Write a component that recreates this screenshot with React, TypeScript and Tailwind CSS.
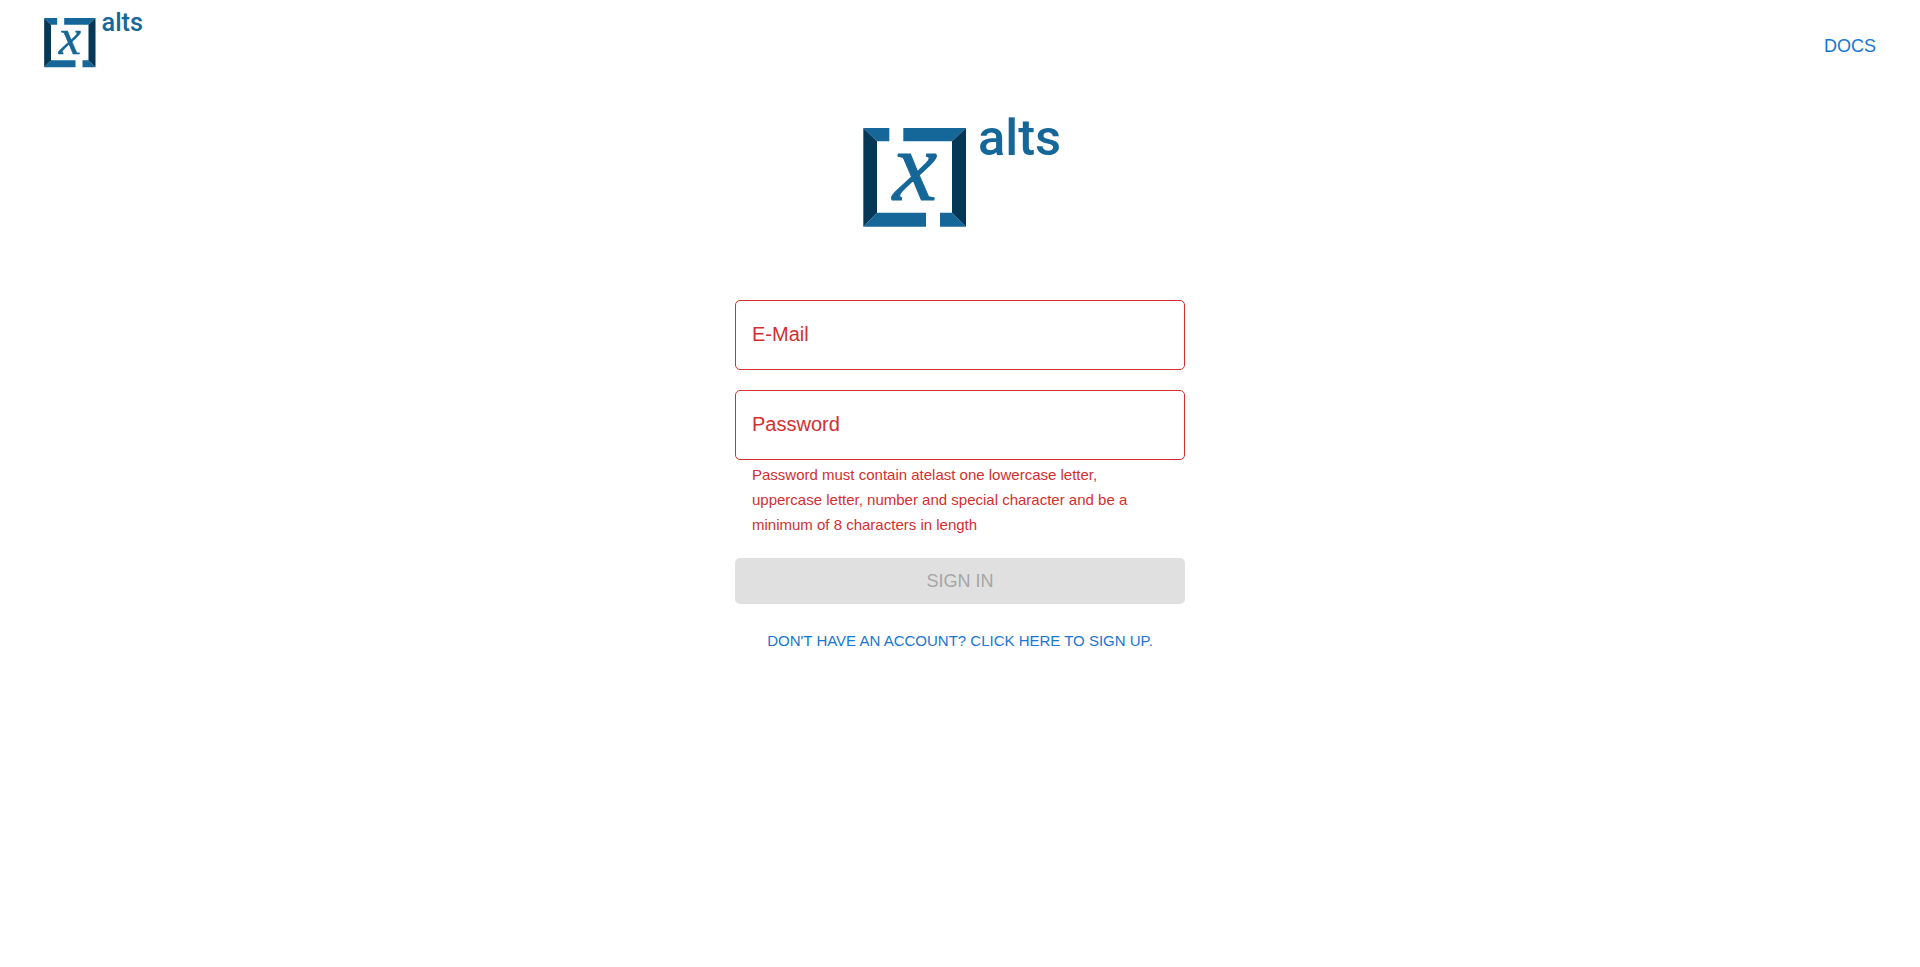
import React from "react";

function Logo({ className }: { className: string }) {
  return (
    <svg viewBox="27 4 606 366" className={className} role="img" aria-label="x alts">
      <g fill="#166799">
        <path d="M40 70H118V110H81Z" />
        <path d="M160 70H348L306 110H160Z" />
        <path d="M40 366L81 324H228V366Z" />
        <path d="M270 324H306L348 366H270Z" />
      </g>
      <g fill="#053756">
        <path d="M40 70L81 110V324L40 366Z" />
        <path d="M348 70L306 110V324L348 366Z" />
      </g>
      <g fill="#166799">
        <text
          x="128"
          y="286"
          fontSize="300"
          stroke="#166799"
          strokeWidth="3"
          className="font-['Liberation_Serif',serif] italic"
        >
          x
        </text>
        <text x="384" y="151" fontSize="152" className="font-[Roboto,sans-serif] font-medium">
          alts
        </text>
      </g>
    </svg>
  );
}

function Field({ id, label, type, helper }: { id: string; label: string; type: string; helper?: string }) {
  return (
    <div>
      <div className="relative">
        <input
          id={id}
          type={type}
          aria-invalid="true"
          aria-describedby={helper ? `${id}-helper` : undefined}
          className="peer block h-[70px] w-full rounded-[5px] border border-[#d32f2f] bg-transparent px-[17px] text-xl outline-none focus:border-2"
        />
        <label
          htmlFor={id}
          className="pointer-events-none absolute inset-y-0 left-[17px] flex items-center pb-[2px] text-xl text-[#d32f2f] peer-focus:hidden"
        >
          {label}
        </label>
      </div>
      {helper && (
        <p id={`${id}-helper`} className="mx-[17px] mt-[2px] mb-px text-[15px] leading-[25px] text-[#d32f2f]">
          {helper}
        </p>
      )}
    </div>
  );
}

export default function App() {
  return (
    <div className="min-h-screen bg-white font-['Liberation_Sans',Arial,sans-serif]">
      <header className="flex items-start justify-between pt-[7px] pr-[44px] pl-[42px]">
        <Logo className="h-[61px] w-[101px]" />
        <a href="#docs" className="mt-6 text-lg leading-[30px] text-[#1976d2]">
          DOCS
        </a>
      </header>
      <main className="mx-auto flex w-full max-w-[450px] flex-col items-center pt-[38px]">
        <Logo className="h-[122px] w-[202px]" />
        <form className="mt-[72px] flex w-full flex-col gap-5" onSubmit={(e) => e.preventDefault()}>
          <Field id="email" label="E-Mail" type="email" />
          <Field
            id="password"
            label="Password"
            type="password"
            helper="Password must contain atelast one lowercase letter, uppercase letter, number and special character and be a minimum of 8 characters in length"
          />
          <button type="submit" disabled className="h-[46px] rounded-[5px] bg-[#e0e0e0] text-lg text-[#a6a6a6]">
            SIGN IN
          </button>
        </form>
        <a href="#signup" className="mt-6 text-[15px] leading-[25px] text-[#1976d2]">
          DON'T HAVE AN ACCOUNT? CLICK HERE TO SIGN UP.
        </a>
      </main>
    </div>
  );
}
